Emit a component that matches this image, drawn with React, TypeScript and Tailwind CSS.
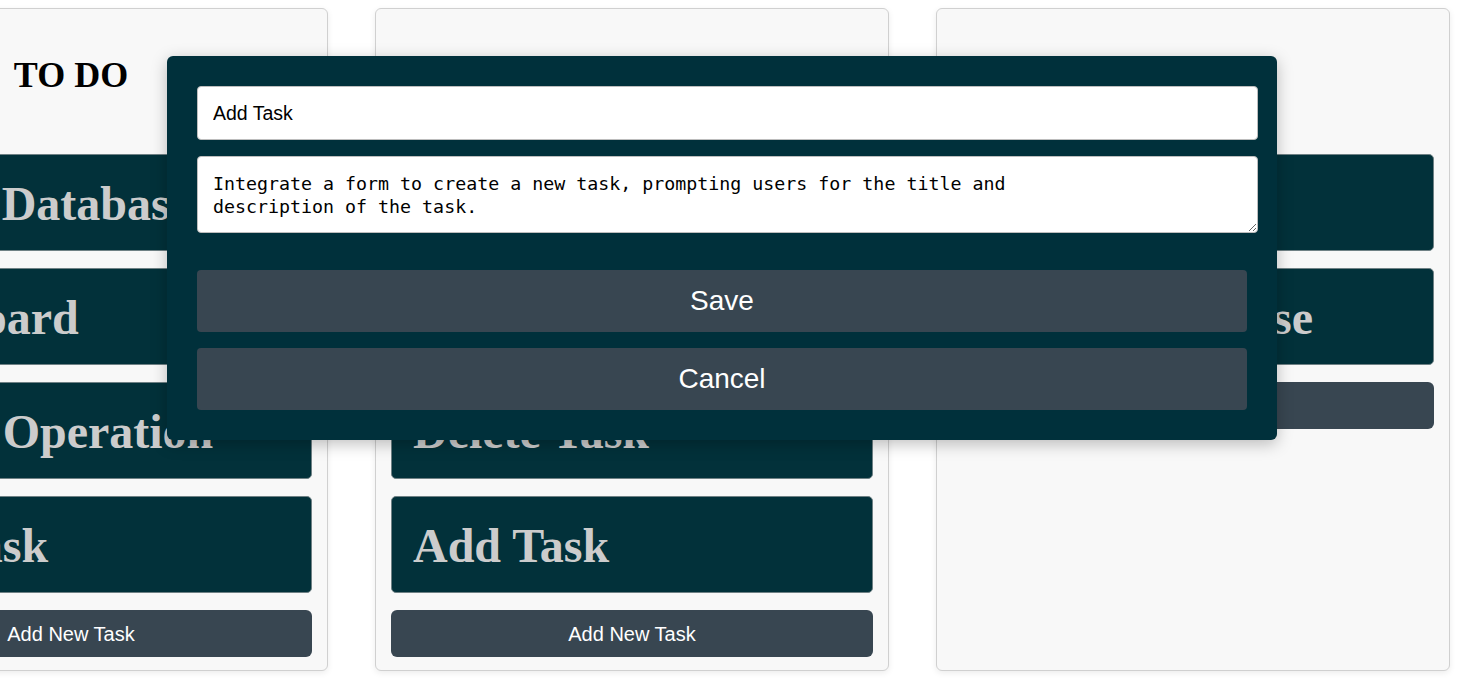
const COLUMNS = [
  { title: "TO DO", tasks: ["Create Database", "Dashboard", "CRUD Operation", "Add Task"] },
  { title: "IN PROGRESS", tasks: ["Edit Task", "Update Task", "Delete Task", "Add Task"] },
  { title: "DONE", tasks: ["Setup", "Create Database"] },
];

function Column({ title, tasks }: { title: string; tasks: string[] }) {
  return (
    <div className="w-[514px] h-[663px] shrink-0 rounded-[6px] border border-[#d0d0d0] bg-[#f8f8f8] px-[15px] pt-[46px] shadow-[0_2px_6px_rgba(0,0,0,0.08)]">
      <h2 className="text-center font-['Liberation_Serif',serif] text-[36px] font-bold leading-[40px] text-black">
        {title}
      </h2>
      <div className="mt-[59px] flex flex-col gap-[17px]">
        {tasks.map((t, i) => (
          <div
            key={i}
            className="flex h-[97px] items-center overflow-hidden whitespace-nowrap rounded-[5px] border border-[#6f8185] bg-[#02313a] pl-[21px] pt-[2px] font-['Liberation_Serif',serif] text-[48px] font-bold leading-[55px] text-[#cccccc]"
          >
            {t}
          </div>
        ))}
        <button className="h-[47px] w-full rounded-[6px] bg-[#384651] font-['Liberation_Sans',Arial,sans-serif] text-[20px] text-white">
          Add New Task
        </button>
      </div>
    </div>
  );
}

function TaskModal() {
  return (
    <div className="absolute left-[167px] top-[56px] w-[1110px] rounded-[6px] bg-[#00303b] px-[30px] pb-[30px] pt-[30px] shadow-[0_4px_16px_rgba(0,0,0,0.25)]">
      <input
        readOnly
        value="Add Task"
        className="block h-[54px] w-[calc(100%+11px)] rounded-[4px] border border-[#bdbdbd] bg-white px-[15px] font-['Liberation_Sans',Arial,sans-serif] text-[19.5px] text-black outline-none"
      />
      <textarea
        readOnly
        value={"Integrate a form to create a new task, prompting users for the title and\ndescription of the task."}
        className="mt-[16px] block h-[77px] w-[calc(100%+11px)] rounded-[4px] border border-[#bdbdbd] bg-white px-[15px] pt-[15px] font-['DejaVu_Sans_Mono',monospace] text-[18.3px] leading-[23px] text-black outline-none"
      />
      <button className="mt-[37px] block h-[62px] w-full rounded-[4px] bg-[#384651] font-['Liberation_Sans',Arial,sans-serif] text-[28px] text-white">
        Save
      </button>
      <button className="mt-[16px] block h-[62px] w-full rounded-[4px] bg-[#384651] font-['Liberation_Sans',Arial,sans-serif] text-[28px] text-white">
        Cancel
      </button>
    </div>
  );
}

export default function App() {
  return (
    <div className="relative h-[687px] w-full overflow-hidden bg-white">
      <div className="ml-[-186px] flex gap-[47px] pt-[8px]">
        {COLUMNS.map((c) => (
          <Column key={c.title} title={c.title} tasks={c.tasks} />
        ))}
      </div>
      <TaskModal />
    </div>
  );
}
